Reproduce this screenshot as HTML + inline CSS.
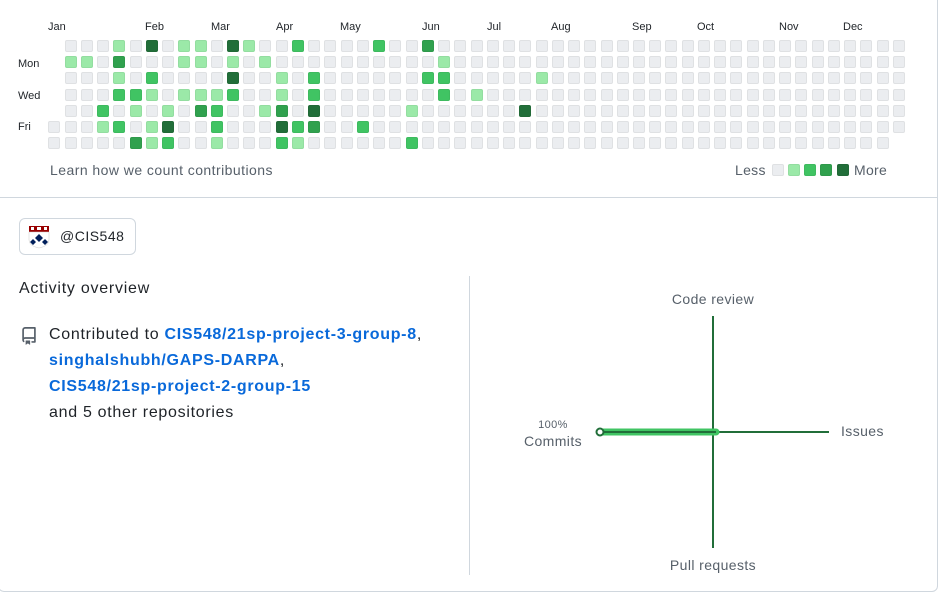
<!DOCTYPE html>
<html><head><meta charset="utf-8"><style>
*{margin:0;padding:0;box-sizing:border-box}
body{width:940px;height:593px;background:#fff;font-family:"Liberation Sans",sans-serif;color:#1f2328;position:relative;overflow:hidden}
.card{position:absolute;left:-2px;top:-10px;width:940px;height:602px;border:1px solid #d0d7de;border-radius:6px}
.a{position:absolute;white-space:nowrap}
.m{font-size:11px;color:#1f2328;top:21px}
.d{font-size:11px;left:18px}
.c{position:absolute;width:12px;height:12px;border-radius:2px;background:#ebedf0;outline:1px solid rgba(27,31,35,0.06);outline-offset:-1px}
a{color:#0969da;font-weight:bold;text-decoration:none}
.g{color:#57606a}
</style></head><body>
<div class="card"></div>
<div class="a m" style="left:48px">Jan</div>
<div class="a m" style="left:145px">Feb</div>
<div class="a m" style="left:211px">Mar</div>
<div class="a m" style="left:276px">Apr</div>
<div class="a m" style="left:340px">May</div>
<div class="a m" style="left:422px">Jun</div>
<div class="a m" style="left:487px">Jul</div>
<div class="a m" style="left:551px">Aug</div>
<div class="a m" style="left:632px">Sep</div>
<div class="a m" style="left:697px">Oct</div>
<div class="a m" style="left:779px">Nov</div>
<div class="a m" style="left:843px">Dec</div>
<div class="a d" style="top:58px">Mon</div>
<div class="a d" style="top:90px">Wed</div>
<div class="a d" style="top:121px">Fri</div>
<div id="grid"></div>
<div class="a g" style="left:50px;top:162px;font-size:14px;letter-spacing:0.45px">Learn how we count contributions</div>
<div class="a g" style="left:735px;top:162px;font-size:14px;letter-spacing:0.3px">Less</div>
<div class="c" style="left:772px;top:164px"></div>
<div class="c" style="left:788px;top:164px;background:#9be9a8"></div>
<div class="c" style="left:804px;top:164px;background:#40c463"></div>
<div class="c" style="left:820px;top:164px;background:#30a14e"></div>
<div class="c" style="left:837px;top:164px;background:#216e39"></div>
<div class="a g" style="left:854px;top:162px;font-size:14px;letter-spacing:0.3px">More</div>
<div class="a" style="left:-2px;top:197px;width:940px;height:1px;background:#d0d7de"></div>

<div class="a" style="left:19px;top:218px;width:117px;height:37px;border:1px solid #d0d7de;border-radius:6px"></div>
<svg class="a" style="left:28px;top:225px" width="22" height="24" viewBox="0 0 22 24">
<rect x="1" y="1" width="20" height="6" fill="#990000"/>
<rect x="3" y="2" width="3" height="3" fill="#fff"/><rect x="9" y="2" width="4" height="3" fill="#fff"/><rect x="16" y="2" width="3" height="3" fill="#fff"/>
<path d="M1 7h20v8q0 6-10 8Q1 21 1 15z" fill="#fff" stroke="#ccc" stroke-width=".5"/>
<path d="M11 9l4 4-4 4-4-4z M5 14l3 3-3 3-3-3z M17 14l3 3-3 3-3-3z" fill="#011f5b"/>
</svg>
<div class="a" style="left:60px;top:228px;font-size:14px;letter-spacing:0.5px">@CIS548</div>
<div class="a" style="left:19px;top:280px;font-size:16px;letter-spacing:0.75px">Activity overview</div>
<svg class="a" style="left:20px;top:327px" width="18" height="18" viewBox="0 0 16 16"><path fill="#57606a" d="M2 2.5A2.5 2.5 0 0 1 4.5 0h8.75a.75.75 0 0 1 .75.75v12.5a.75.75 0 0 1-.75.75h-2.5a.75.75 0 0 1 0-1.5h1.75v-2h-8a1 1 0 0 0-.714 1.7.75.75 0 1 1-1.072 1.05A2.495 2.495 0 0 1 2 11.5Zm10.5-1h-8a1 1 0 0 0-1 1v6.708A2.486 2.486 0 0 1 4.5 9h8ZM5 12.25a.25.25 0 0 1 .25-.25h3.5a.25.25 0 0 1 .25.25v3.25a.25.25 0 0 1-.4.2l-1.45-1.087a.249.249 0 0 0-.3 0L5.4 15.7a.25.25 0 0 1-.4-.2Z"/></svg>
<div class="a" style="left:49px;top:322px;font-size:16px;line-height:26px;letter-spacing:0.7px">Contributed to <a>CIS548/21sp-project-3-group-8</a>,<br><a>singhalshubh/GAPS-DARPA</a>,<br><a>CIS548/21sp-project-2-group-15</a><br>and 5 other repositories</div>

<div class="a" style="left:469px;top:276px;width:1px;height:299px;background:#d0d7de"></div>
<svg class="a" style="left:0;top:0" width="940" height="593">
<line x1="713" y1="316" x2="713" y2="548" stroke="#216e39" stroke-width="2"/>
<line x1="600" y1="432" x2="829" y2="432" stroke="#216e39" stroke-width="2"/>
<line x1="600" y1="432" x2="716" y2="432" stroke="#40c463" stroke-width="7" stroke-linecap="round"/>
<line x1="600" y1="432" x2="716" y2="432" stroke="#216e39" stroke-width="2"/>
<circle cx="600" cy="432" r="3.5" fill="#fff" stroke="#216e39" stroke-width="2"/>
<g font-family="Liberation Sans" fill="#57606a" font-size="14" letter-spacing="0.4">
<text x="713" y="304" text-anchor="middle">Code review</text>
<text x="841" y="436">Issues</text>
<text x="553" y="428" text-anchor="middle" font-size="11">100%</text>
<text x="553" y="446" text-anchor="middle">Commits</text>
<text x="713" y="570" text-anchor="middle">Pull requests</text>
</g></svg>
<script>
var L={1:'#9be9a8',2:'#40c463',3:'#30a14e',4:'#216e39'};
var lv={
'0,4':1,'0,6':4,'0,8':1,'0,9':1,'0,11':4,'0,12':1,'0,15':2,'0,20':2,'0,23':3,
'1,1':1,'1,2':1,'1,4':3,'1,8':1,'1,9':1,'1,11':1,'1,13':1,'1,24':1,
'2,4':1,'2,6':2,'2,11':4,'2,14':1,'2,16':2,'2,23':2,'2,24':2,'2,30':1,
'3,4':2,'3,5':2,'3,6':1,'3,8':1,'3,9':1,'3,10':1,'3,11':2,'3,14':1,'3,16':2,'3,24':2,'3,26':1,
'4,3':2,'4,5':1,'4,7':1,'4,9':3,'4,10':2,'4,13':1,'4,14':3,'4,16':4,'4,22':1,'4,29':4,
'5,3':1,'5,4':2,'5,6':1,'5,7':4,'5,10':2,'5,14':4,'5,15':2,'5,16':3,'5,19':2,
'6,5':3,'6,6':1,'6,7':2,'6,10':1,'6,14':2,'6,15':1,'6,22':2};
var h='';
for(var c=0;c<53;c++)for(var r=0;r<7;r++){
if(c==0&&r<5)continue;if(c==52&&r==6)continue;
var v=lv[r+','+c];
h+='<div class="c" style="left:'+(48.3+c*16.24).toFixed(1)+'px;top:'+(40+r*16.2).toFixed(1)+'px'+(v?';background:'+L[v]:'')+'"></div>';}
document.getElementById('grid').innerHTML=h;
</script>
</body></html>
